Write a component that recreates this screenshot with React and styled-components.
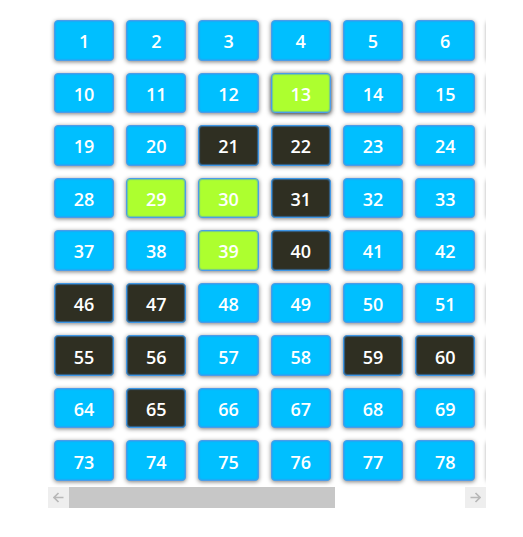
import React, { useEffect, useRef, useState } from "react";
import styled, { createGlobalStyle } from "styled-components";

const GlobalStyle = createGlobalStyle`
  *, *::before, *::after { box-sizing: border-box; }
  body {
    margin: 0;
    background: #ffffff;
    font-family: "Open Sans", "Noto Sans", sans-serif;
  }
`;

const Page = styled.main`
  padding: 14px 37px 29px 48px;
`;

const Viewport = styled.div`
  overflow-x: auto;
  scrollbar-width: none;
  &::-webkit-scrollbar { display: none; }
`;

const SeatGrid = styled.div`
  display: grid;
  grid-template-columns: repeat(9, 1fr);
  grid-template-rows: repeat(9, 1fr);
  gap: 12px;
  width: 652px;
  height: 473px;
  padding: 6px 8px 6px 6px;
`;

const fills = {
  free: "#00bfff",
  picked: "#adff2f",
  taken: "#2f2f22",
};

const edges = {
  free: "#4a9cea",
  picked: "#4a9cea",
  taken: "#3f97e6",
};

const Seat = styled.button`
  display: flex;
  align-items: center;
  justify-content: center;
  min-width: 0;
  padding: 2px 0 0;
  border: 1px solid ${({ $state }) => edges[$state]};
  border-radius: 4px;
  background: ${({ $state }) => fills[$state]};
  color: #ffffff;
  font-family: inherit;
  font-size: 18px;
  font-weight: 600;
  line-height: 24px;
  cursor: pointer;
  outline: none;
  box-shadow:
    inset 0 0 1px 1px rgba(60, 150, 235, 0.5),
    ${({ $raised }) =>
      $raised
        ? "0 1px 5px rgba(0, 0, 0, 0.9)"
        : "0 1px 4px rgba(0, 0, 0, 0.5)"};
`;

const ScrollBar = styled.div`
  display: flex;
  height: 21px;
`;

const ArrowButton = styled.button`
  display: flex;
  align-items: center;
  justify-content: center;
  flex: 0 0 21px;
  padding: 0;
  border: 0;
  background: #eeeeee;
  color: #b8b8b8;
`;

const Track = styled.div`
  flex: 1;
  min-width: 0;
`;

const Thumb = styled.div`
  height: 100%;
  background: #c7c7c7;
`;

const picked = new Set([13, 29, 30, 39]);
const taken = new Set([21, 22, 31, 40, 46, 47, 55, 56, 59, 60, 65]);
const seats = Array.from({ length: 81 }, (_, index) => index + 1);

function seatState(number) {
  if (picked.has(number)) return "picked";
  return taken.has(number) ? "taken" : "free";
}

function Arrow({ d }) {
  return (
    <svg width="11" height="11" viewBox="0 0 11 11" fill="none" stroke="currentColor" strokeWidth="1.7" aria-hidden="true">
      <path d={d} />
    </svg>
  );
}

export default function App() {
  const viewport = useRef(null);
  const [thumb, setThumb] = useState({ size: 67, start: 0 });

  const measure = () => {
    const { clientWidth, scrollWidth, scrollLeft } = viewport.current;
    setThumb({
      size: (clientWidth / scrollWidth) * 100,
      start: (scrollLeft / scrollWidth) * 100,
    });
  };

  useEffect(() => {
    measure();
    window.addEventListener("resize", measure);
    return () => window.removeEventListener("resize", measure);
  }, []);

  const scroll = (distance) => viewport.current.scrollBy({ left: distance, behavior: "smooth" });

  return (
    <>
      <GlobalStyle />
      <Page>
        <Viewport ref={viewport} onScroll={measure}>
          <SeatGrid>
            {seats.map((number) => (
              <Seat key={number} type="button" $state={seatState(number)} $raised={number === 13}>
                {number}
              </Seat>
            ))}
          </SeatGrid>
        </Viewport>
        <ScrollBar>
          <ArrowButton type="button" aria-label="Scroll left" onClick={() => scroll(-72)}>
            <Arrow d="M10.5 5.5H1.2M5.5 1L1 5.5L5.5 10" />
          </ArrowButton>
          <Track>
            <Thumb style={{ width: `${thumb.size}%`, marginLeft: `${thumb.start}%` }} />
          </Track>
          <ArrowButton type="button" aria-label="Scroll right" onClick={() => scroll(72)}>
            <Arrow d="M0.5 5.5H9.8M5.5 1L10 5.5L5.5 10" />
          </ArrowButton>
        </ScrollBar>
      </Page>
    </>
  );
}
